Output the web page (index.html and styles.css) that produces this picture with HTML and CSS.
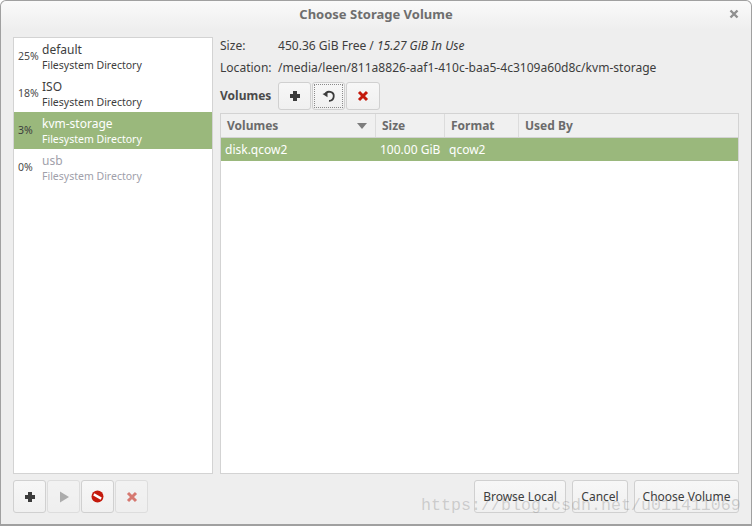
FILE: index.html
```html
<!DOCTYPE html>
<html lang="en">
<head>
<meta charset="utf-8">
<title>Choose Storage Volume</title>
<link rel="stylesheet" href="styles.css">
</head>
<body>
<div class="window">
  <header class="titlebar">
    <span class="title">Choose Storage Volume</span>
    <svg class="close" width="10" height="10" viewBox="0 0 10 10"><path d="M1.5 1.5l7 7M8.500 1.500l-7 7" stroke="#8f8f8f" stroke-width="2.400" fill="none"/></svg>
  </header>
  <main class="content">
    <div class="columns">
      <aside class="pools">
        <div class="pool"><span class="pct">25%</span><div class="pool-text"><span class="pool-name">default</span><span class="pool-type">Filesystem Directory</span></div></div>
        <div class="pool"><span class="pct">18%</span><div class="pool-text"><span class="pool-name">ISO</span><span class="pool-type">Filesystem Directory</span></div></div>
        <div class="pool selected"><span class="pct">3%</span><div class="pool-text"><span class="pool-name">kvm-storage</span><span class="pool-type">Filesystem Directory</span></div></div>
        <div class="pool inactive"><span class="pct">0%</span><div class="pool-text"><span class="pool-name">usb</span><span class="pool-type">Filesystem Directory</span></div></div>
      </aside>
      <section class="details">
        <div class="info"><span class="info-label">Size:</span><span>450.36 GiB Free / <em>15.27 GiB In Use</em></span></div>
        <div class="info loc"><span class="info-label">Location:</span><span>/media/leen/811a8826-aaf1-410c-baa5-4c3109a60d8c/kvm-storage</span></div>
        <div class="vol-bar">
          <strong class="vol-label">Volumes</strong>
          <div class="tools">
            <button class="tool"><svg width="12" height="12" viewBox="0 0 12 12"><path d="M4 1h4v3h3v4H8v3H4V8H1V4h3z" fill="#3c3c3c"/></svg></button>
            <button class="tool focus"><span class="focus-ring"><svg width="14" height="14" viewBox="0 0 14 14"><path d="M3 5.800A4.500 4.500 0 1 1 7 11.800" fill="none" stroke="#3c3c3c" stroke-width="1.800"/><path d="M0.500 5L5.500 3L5.500 8.200z" fill="#3c3c3c"/></svg></span></button>
            <button class="tool wide"><svg width="12" height="12" viewBox="0 0 12 12"><path d="M2 2l8 8M10 2l-8 8" stroke="#c41a0c" stroke-width="3" fill="none"/></svg></button>
          </div>
        </div>
        <div class="table">
          <div class="thead">
            <div class="th c1">Volumes<svg class="sort" width="10" height="6" viewBox="0 0 10 6"><path d="M0 0h10L5 6z" fill="#7d7d7d"/></svg></div>
            <div class="th c2">Size</div>
            <div class="th c3">Format</div>
            <div class="th c4">Used By</div>
          </div>
          <div class="tr">
            <div class="td c1">disk.qcow2</div>
            <div class="td c2">100.00 GiB</div>
            <div class="td c3">qcow2</div>
            <div class="td c4"></div>
          </div>
        </div>
      </section>
    </div>
    <footer class="actions">
      <div class="tools">
        <button class="tool big"><svg width="12" height="12" viewBox="0 0 12 12"><path d="M4 1h4v3h3v4H8v3H4V8H1V4h3z" fill="#3c3c3c"/></svg></button>
        <button class="tool big off"><svg width="12" height="12" viewBox="0 0 12 12"><path d="M2 0.500l9 5.500-9 5.500z" fill="#777"/></svg></button>
        <button class="tool big"><svg width="13" height="13" viewBox="0 0 13 13"><circle cx="6.500" cy="6.500" r="6" fill="#c41a0c"/><path d="M2.800 4.400l7.400 4.200" stroke="#fff" stroke-width="2.400"/></svg></button>
        <button class="tool big off"><svg width="12" height="12" viewBox="0 0 12 12"><path d="M2 2l8 8M10 2l-8 8" stroke="#c41a0c" stroke-width="3" fill="none"/></svg></button>
      </div>
      <div class="dialog-btns">
        <button class="btn b1">Browse Local</button>
        <button class="btn b2">Cancel</button>
        <button class="btn b3">Choose Volume</button>
      </div>
    </footer>
  </main>
</div>
<div class="watermark">https://blog.csdn.net/u011411069</div>
</body>
</html>
```
FILE: styles.css
```css
* { box-sizing: border-box; }
html, body { margin: 0; height: 100%; background: #fff; }
body { position: relative; width: 752px; height: 526px; overflow: hidden; font: 12px "Noto Sans", sans-serif; color: #3d3d3d; }
button { font: inherit; color: inherit; padding: 0; margin: 0; }
.window { width: 752px; height: 526px; display: flex; flex-direction: column; background: #eeeeee; border: 1px solid #a0a0a0; border-width: 1px 1px 2px 1px; border-radius: 6px 6px 0 0; }
.titlebar { height: 29px; flex: none; display: flex; align-items: center; justify-content: center; position: relative; background: linear-gradient(#fafafa, #eeeeee); border-radius: 6px 6px 0 0; }
.title { font-weight: 700; font-size: 13px; color: #6e6e6e; margin-bottom: 3px; }
.close { position: absolute; right: 12px; top: 8px; }
.content { flex: 1; display: flex; flex-direction: column; padding: 7px 12px 11px 12px; min-height: 0; }
.columns { flex: 1; display: flex; gap: 7px; min-height: 0; }
.pools { width: 200px; flex: none; background: #fff; border: 1px solid #d3d3d3; }
.pool { height: 37px; display: flex; align-items: center; padding-left: 4px; }
.pct { width: 24px; flex: none; font-size: 10.500px; color: #4a4a4a; margin-top: -1px; }
.pool-text { display: flex; flex-direction: column; }
.pool-name { font-size: 12px; height: 18px; line-height: 20px; }
.pool-type { font-size: 10.500px; height: 15px; line-height: 15px; }
.selected { background: #9ab87c; }
.selected .pool-text { color: #fff; }
.selected .pct { color: #3d3d3d; }
.inactive .pool-text { color: #a0a0aa; }
.details { flex: 1; display: flex; flex-direction: column; min-width: 0; }
.info { display: flex; height: 16px; align-items: center; font-size: 12.050px; white-space: nowrap; }
.info em { font-size: 12px; }
.loc { margin-top: 6px; }
.info-label { width: 58px; flex: none; }
.vol-bar { display: flex; align-items: center; gap: 7px; margin-top: 7px; height: 28px; }
.vol-label { font-weight: 700; font-size: 12px; color: #4a4a4a; margin-top: -2px; }
.tools { display: flex; gap: 1px; }
.tool { width: 33px; height: 28px; display: flex; align-items: center; justify-content: center; background: linear-gradient(#f7f7f7, #f0f0f0); border: 1px solid #d0d0d0; border-radius: 3px; }
.wide { width: 34px; }
.focus-ring { width: 29px; height: 24px; display: flex; align-items: center; justify-content: center; border: 1px dotted #8a8a8a; }
.big { height: 33px; }
.off { opacity: .55; }
.table { flex: 1; margin-top: 3px; background: #fff; border: 1px solid #d3d3d3; display: flex; flex-direction: column; min-height: 0; }
.thead { display: flex; height: 24px; background: #f0f0f0; border-bottom: 1px solid #d3d3d3; }
.th { font-weight: 700; font-size: 12px; color: #6b6b6b; display: flex; align-items: center; padding-left: 6px; border-right: 1px solid #dcdcdc; position: relative; }
.th.c4 { border-right: 0; }
.sort { position: absolute; right: 8px; top: 9px; }
.tr { display: flex; height: 23px; background: #9ab87c; color: #fff; align-items: center; }
.td { font-size: 12px; padding-left: 4px; white-space: nowrap; }
.c1 { width: 155px; }
.c2 { width: 69px; }
.c3 { width: 74px; }
.c4 { flex: 1; }
.actions { display: flex; justify-content: space-between; margin-top: 6px; height: 33px; flex: none; }
.dialog-btns { display: flex; gap: 6px; }
.btn { height: 33px; background: linear-gradient(#f7f7f7, #f0f0f0); border: 1px solid #d0d0d0; border-radius: 3px; font-size: 12px; color: #3d3d3d; }
.b1 { width: 92px; }
.b2 { width: 56px; }
.b3 { width: 105px; }
.watermark { position: absolute; left: 421px; top: 496px; font: 16.670px "Liberation Mono", monospace; color: rgba(130,130,130,.32); white-space: nowrap; pointer-events: none; }
```
